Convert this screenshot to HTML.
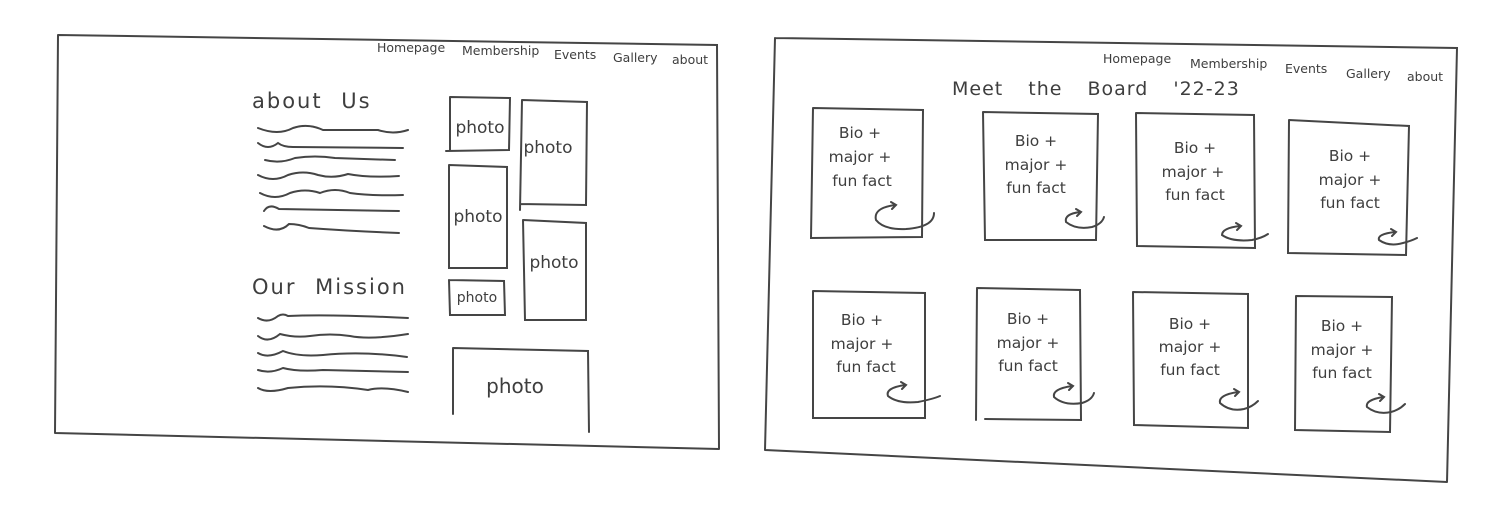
<!DOCTYPE html>
<html><head><meta charset="utf-8"><style>
html,body{margin:0;padding:0;background:#fff;width:1508px;height:513px;overflow:hidden}
svg text{font-family:"DejaVu Sans","Liberation Sans",sans-serif;fill:#3e3e3e}
</style></head><body>
<svg width="1508" height="513" viewBox="0 0 1508 513" xmlns="http://www.w3.org/2000/svg">
<g fill="none" stroke="#454545" stroke-width="2" stroke-linecap="round">
<path d="M58 35 L717 45 L719 449 M55 433 L719 449 M58 35 L55 433"/>
<path d="M775 38 L1457 48 L1447 482 M765 450 L1447 482 M775 38 L765 450"/>
<path d="M258 128 q20 8 35 0 q15 -5 30 2 q30 0 55 0 q15 5 30 0"/>
<path d="M258 143 q10 8 20 0 q5 4 15 4 l110 1"/>
<path d="M265 160 q15 4 30 -2 q20 -3 40 0 l60 2"/>
<path d="M258 175 q15 8 30 0 q15 -5 30 0 q15 4 30 -1 q20 4 51 2"/>
<path d="M260 193 q15 8 30 0 q15 -5 30 0 q15 -6 30 0 q20 3 53 2"/>
<path d="M264 211 q5 -8 15 -2 l120 2"/>
<path d="M264 226 q15 8 25 -2 q10 0 20 4 q40 3 90 5"/>
<path d="M258 318 q10 6 20 -2 q5 -3 10 0 q40 -2 120 2"/>
<path d="M258 336 q10 8 22 -2 q15 4 30 2 q20 -3 40 0 q20 4 58 -2"/>
<path d="M258 353 q10 6 25 -2 q15 6 40 4 q40 -4 84 2"/>
<path d="M258 370 q12 4 25 -2 q15 4 40 2 l85 2"/>
<path d="M258 388 q10 6 30 0 q40 -4 80 2 q15 -4 40 2"/>
<path d="M450 97 L510 98 L509 150 L446 151 M450 97 L450 150"/>
<path d="M522 100 L587 102 L586 205 L521 204 M522 100 L520 210"/>
<path d="M449 165 L507 167 L507 268 L449 268 L449 165"/>
<path d="M523 220 L586 223 L586 320 L525 320 L523 220"/>
<path d="M449 280 L504 281 L505 315 L450 315 L449 280"/>
<path d="M453 348 L588 351 L589 432 M453 348 L453 414"/>
<path d="M813 108 L923 110 L922 237 L811 238 L813 108"/>
<path d="M983 112 L1098 114 L1096 240 L985 240 L983 112"/>
<path d="M1136 113 L1254 115 L1255 248 L1137 246 L1136 113"/>
<path d="M1289 120 L1409 126 L1406 255 L1288 253 L1289 120"/>
<path d="M813 291 L925 293 L925 418 L813 418 L813 291"/>
<path d="M977 288 L1080 290 L1081 420 L985 419 M977 288 L976 420"/>
<path d="M1133 292 L1248 294 L1248 428 L1134 425 L1133 292"/>
<path d="M1296 296 L1392 297 L1390 432 L1295 430 L1296 296"/>
<g>
<path d="M895 205 q-22 3 -19 15 q8 10 30 9 q28 -2 28 -16 M891 202 l5 3 l-4 4"/>
<path d="M1080 212 q-16 2 -14 10 q10 8 26 5 q10 -3 12 -10 M1076 209 l5 3 l-4 4"/>
<path d="M1240 226 q-18 2 -18 9 q10 7 30 5 q10 -2 16 -6 M1236 223 l5 3 l-4 4"/>
<path d="M1395 232 q-18 2 -16 8 q10 7 24 3 q8 -2 14 -5 M1391 229 l5 3 l-4 4"/>
<path d="M905 385 q-20 3 -17 11 q10 8 30 6 q15 -3 22 -6 M901 382 l5 3 l-4 4"/>
<path d="M1072 386 q-20 3 -18 11 q10 9 28 6 q10 -3 12 -10 M1068 383 l5 3 l-4 4"/>
<path d="M1238 392 q-20 3 -18 11 q10 9 24 6 q8 -2 14 -8 M1234 389 l5 3 l-4 4"/>
<path d="M1383 397 q-18 3 -16 10 q10 8 24 5 q8 -2 14 -8 M1379 394 l5 3 l-4 4"/>
</g>
</g>
<g font-size="12.5">
<text x="377" y="52">Homepage</text><text x="462" y="55">Membership</text><text x="554" y="59">Events</text><text x="613" y="62">Gallery</text><text x="672" y="64">about</text>
<text x="1103" y="63">Homepage</text><text x="1190" y="68">Membership</text><text x="1285" y="73">Events</text><text x="1346" y="78">Gallery</text><text x="1407" y="81">about</text>
</g>
<text x="952" y="95" font-size="19" letter-spacing="1" word-spacing="18">Meet the Board '22-23</text>
<text x="252" y="108" font-size="21" letter-spacing="2" word-spacing="10">about Us</text>
<text x="252" y="294" font-size="21" letter-spacing="2" word-spacing="10">Our Mission</text>
<g font-size="17" text-anchor="middle">
<text x="480" y="133">photo</text><text x="548" y="153">photo</text><text x="478" y="222">photo</text><text x="554" y="268">photo</text>
<text x="477" y="302" font-size="14">photo</text><text x="515" y="393" font-size="20">photo</text>
</g>
<g font-size="15.5" text-anchor="middle">
<text x="860" y="138">Bio +</text><text x="860" y="162">major +</text><text x="862" y="186">fun fact</text>
<text x="1036" y="146">Bio +</text><text x="1036" y="170">major +</text><text x="1036" y="193">fun fact</text>
<text x="1195" y="153">Bio +</text><text x="1193" y="177">major +</text><text x="1195" y="200">fun fact</text>
<text x="1350" y="161">Bio +</text><text x="1350" y="185">major +</text><text x="1350" y="208">fun fact</text>
<text x="862" y="325">Bio +</text><text x="862" y="349">major +</text><text x="866" y="372">fun fact</text>
<text x="1028" y="324">Bio +</text><text x="1028" y="348">major +</text><text x="1028" y="371">fun fact</text>
<text x="1190" y="329">Bio +</text><text x="1190" y="352">major +</text><text x="1190" y="375">fun fact</text>
<text x="1342" y="331">Bio +</text><text x="1342" y="355">major +</text><text x="1342" y="378">fun fact</text>
</g>
</svg>
</body></html>
